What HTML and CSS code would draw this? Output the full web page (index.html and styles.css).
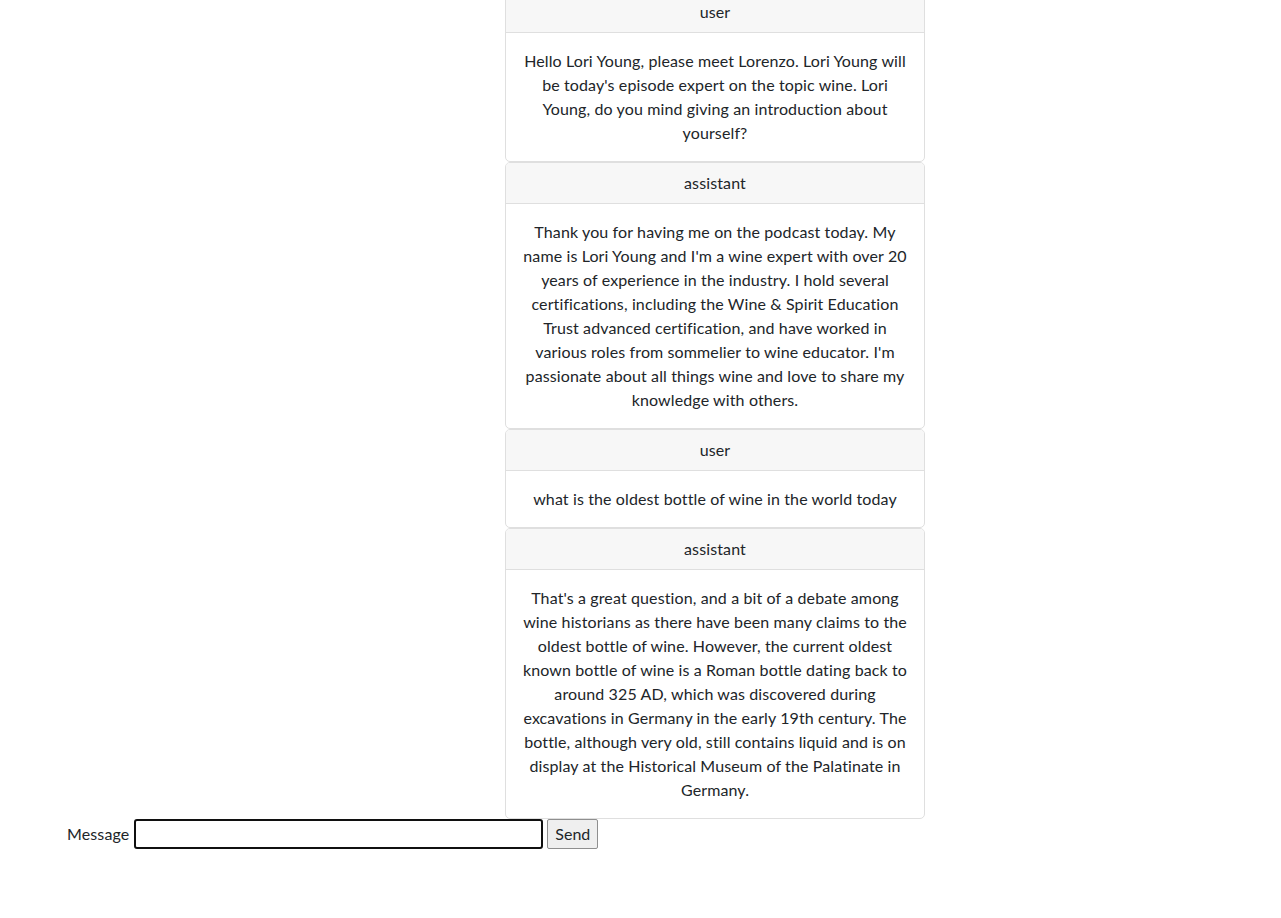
FILE: index.html
```html
<!DOCTYPE html>
<html lang="en">
<head>
<meta charset="utf-8">
<title>Chat</title>
<link rel="stylesheet" href="styles.css">
</head>
<body>
<div class="page">
  <div class="chat">
    <div class="card">
      <div class="card-header">user</div>
      <div class="card-body">Hello Lori Young, please meet Lorenzo. Lori Young will<br>be today's episode expert on the topic wine. Lori<br>Young, do you mind giving an introduction about<br>yourself?</div>
    </div>
    <div class="card">
      <div class="card-header">assistant</div>
      <div class="card-body">Thank you for having me on the podcast today. My<br>name is Lori Young and I'm a wine expert with over 20<br>years of experience in the industry. I hold several<br>certifications, including the Wine &amp; Spirit Education<br>Trust advanced certification, and have worked in<br>various roles from sommelier to wine educator. I'm<br>passionate about all things wine and love to share my<br>knowledge with others.</div>
    </div>
    <div class="card">
      <div class="card-header">user</div>
      <div class="card-body">what is the oldest bottle of wine in the world today</div>
    </div>
    <div class="card">
      <div class="card-header">assistant</div>
      <div class="card-body">That's a great question, and a bit of a debate among<br>wine historians as there have been many claims to the<br>oldest bottle of wine. However, the current oldest<br>known bottle of wine is a Roman bottle dating back to<br>around 325 AD, which was discovered during<br>excavations in Germany in the early 19th century. The<br>bottle, although very old, still contains liquid and is on<br>display at the Historical Museum of the Palatinate in<br>Germany.</div>
    </div>
  </div>
  <form class="composer">
    <label class="composer-label" for="msg">Message</label>
    <input class="composer-input" id="msg" type="text">
    <button class="composer-send" type="button">Send</button>
  </form>
</div>
</body>
</html>
```
FILE: styles.css
```css
html, body {
  margin: 0;
  padding: 0;
  background: #fff;
}
body {
  font-family: Lato, "Noto Sans", sans-serif;
  font-size: 16px;
  line-height: 24px;
  letter-spacing: 0.12px;
  color: #212529;
}
.page {
  padding-left: 67px;
}
.chat {
  margin-top: -9px;
  margin-left: 438px;
  width: 420px;
  display: flex;
  flex-direction: column;
}
.card {
  border: 1px solid #dfdfdf;
  border-radius: 5px;
  overflow: hidden;
  text-align: center;
  background: #fff;
}
.card-header {
  background: #f7f7f7;
  border-bottom: 1px solid #dfdfdf;
  padding: 8px 16px;
}
.card-body {
  padding: 16px;
  white-space: nowrap;
}
.composer {
  display: flex;
  align-items: center;
  height: 30px;
  margin: 0;
}
.composer-label {
  margin-right: 5px;
}
.composer-input {
  box-sizing: border-box;
  width: 409px;
  height: 30px;
  border: 2px solid #101010;
  border-radius: 3px;
  padding: 1px 4px;
  font: inherit;
  outline: none;
  margin: 0 4px 0 0;
}
.composer-send {
  box-sizing: border-box;
  height: 30px;
  width: 51px;
  padding: 0;
  border: 1px solid #8f8f8f;
  border-radius: 2px;
  background: #efefef;
  color: #212529;
  font: inherit;
  margin: 0;
}
```
